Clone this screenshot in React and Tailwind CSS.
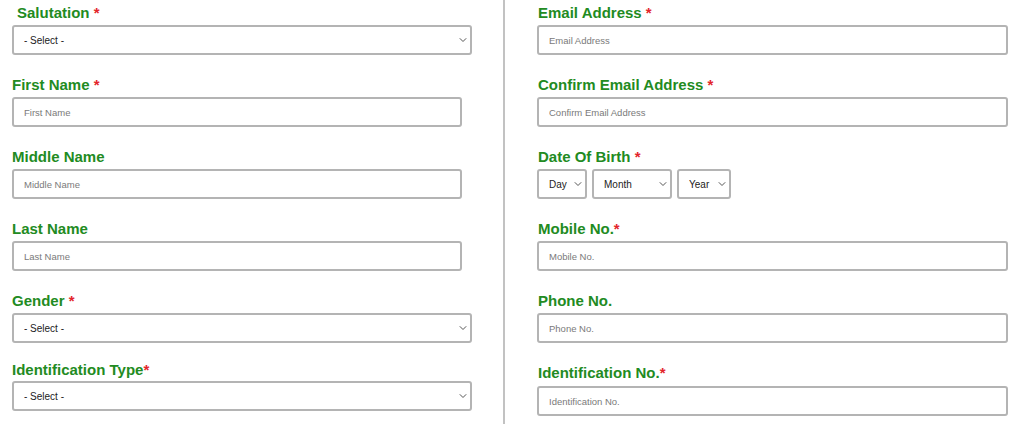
import React from 'react';

const Chevron = () => (
  <svg className="pointer-events-none absolute right-[5px] top-1/2 -translate-y-1/2" width="8" height="5" viewBox="0 0 8 5" fill="none">
    <path d="M0.8 0.8 L4 4 L7.2 0.8" stroke="#555" strokeWidth="1" />
  </svg>
);

const Label = ({ text, req, space = true, className = '' }) => (
  <label className={`block text-[15px] leading-[18px] font-bold text-[#228b22] ${className}`}>
    {text}
    {req && <span className="text-[#e3262b]">{space ? ' *' : '*'}</span>}
  </label>
);

const TextInput = ({ placeholder, width }) => (
  <input
    type="text"
    placeholder={placeholder}
    className={`block ${width} h-[30px] border-2 border-[#b4b4b4] rounded-[3px] bg-white pl-[10px] text-[9.5px] text-[#333] placeholder:text-[#7a7a7a] outline-none`}
  />
);

const Select = ({ value, width, height = 'h-[30px]', pad = 'pl-[10px]', size = 'text-[10px]' }) => (
  <div className={`relative ${width}`}>
    <select
      defaultValue={value}
      className={`block w-full ${height} appearance-none border-2 border-[#b4b4b4] rounded-[3px] bg-white ${pad} ${size} text-[#222] outline-none`}
    >
      <option>{value}</option>
    </select>
    <Chevron />
  </div>
);

const App = () => {
  return (
    <div className="h-[424px] overflow-hidden bg-white flex font-['Liberation_Sans',Arial,sans-serif]">
      {/* left column */}
      <div className="w-[503px] pl-3 pt-[4px]">
        <Label text="Salutation" req className="pl-[5px]" />
        <div className="mt-[3px]">
          <Select value="- Select -" width="w-[460px]" />
        </div>

        <Label text="First Name" req className="mt-[21px]" />
        <div className="mt-[3px]">
          <TextInput placeholder="First Name" width="w-[450px]" />
        </div>

        <Label text="Middle Name" className="mt-[21px]" />
        <div className="mt-[3px]">
          <TextInput placeholder="Middle Name" width="w-[450px]" />
        </div>

        <Label text="Last Name" className="mt-[21px]" />
        <div className="mt-[3px]">
          <TextInput placeholder="Last Name" width="w-[450px]" />
        </div>

        <Label text="Gender" req className="mt-[21px]" />
        <div className="mt-[3px]">
          <Select value="- Select -" width="w-[460px]" />
        </div>

        <Label text="Identification Type" req space={false} className="mt-[18px]" />
        <div className="mt-[2px]">
          <Select value="- Select -" width="w-[460px]" />
        </div>
      </div>

      {/* divider */}
      <div className="w-[2px] bg-[#c2c2c2]" />

      {/* right column */}
      <div className="pl-[32px] pt-[4px]">
        <Label text="Email Address" req className="pl-px" />
        <div className="mt-[3px]">
          <TextInput placeholder="Email Address" width="w-[471px]" />
        </div>

        <Label text="Confirm Email Address" req className="mt-[21px] pl-px" />
        <div className="mt-[3px]">
          <TextInput placeholder="Confirm Email Address" width="w-[471px]" />
        </div>

        <Label text="Date Of Birth" req className="mt-[21px] pl-px" />
        <div className="mt-[3px] flex gap-[5px]">
          <Select value="Day" width="w-[50px]" />
          <Select value="Month" width="w-[80px]" />
          <Select value="Year" width="w-[54px]" />
        </div>

        <Label text="Mobile No." req space={false} className="mt-[21px] pl-px" />
        <div className="mt-[3px]">
          <TextInput placeholder="Mobile No." width="w-[471px]" />
        </div>

        <Label text="Phone No." className="mt-[21px] pl-px" />
        <div className="mt-[3px]">
          <TextInput placeholder="Phone No." width="w-[471px]" />
        </div>

        <Label text="Identification No." req space={false} className="mt-[21px] pl-px" />
        <div className="mt-[4px]">
          <TextInput placeholder="Identification No." width="w-[471px]" />
        </div>
      </div>
    </div>
  );
};

export default App;
